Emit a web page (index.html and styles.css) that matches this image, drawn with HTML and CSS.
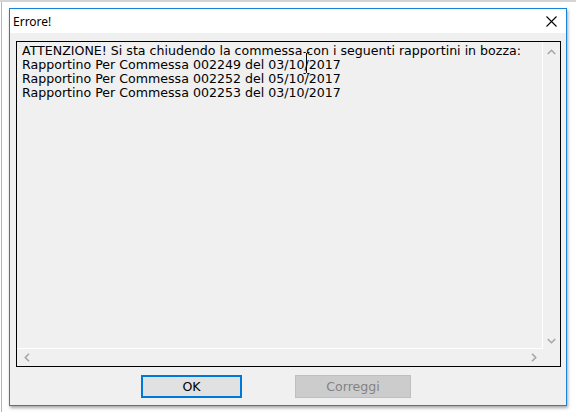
FILE: index.html
```html
<!DOCTYPE html>
<html lang="it">
<head>
  <meta charset="UTF-8" />
  <title>Errore!</title>
  <link rel="stylesheet" href="styles.css">
</head>
<body>
  <div class="desktop">
    <div class="dialog">
      <div class="titlebar">
        <span class="title">Errore!</span>
        <span class="close">
          <svg width="11" height="11" viewBox="0 0 11 11"><path d="M0.5 0.5 L10.5 10.5 M10.5 0.5 L0.5 10.5" stroke="#000" stroke-width="1.1"/></svg>
        </span>
      </div>
      <div class="content">
        <div class="textbox">
          <div class="text-area">
            <div class="lines">
              <p>ATTENZIONE! Si sta chiudendo la commessa con i seguenti rapportini in bozza:</p>
              <p>Rapportino Per Commessa 002249 del 03/10/2017</p>
              <p>Rapportino Per Commessa 002252 del 05/10/2017</p>
              <p>Rapportino Per Commessa 002253 del 03/10/2017</p>
            </div>
            <div class="vscroll">
              <svg width="9" height="6" viewBox="0 0 9 6"><polyline points="0.8,5 4.5,1.3 8.2,5" fill="none" stroke="#a6a6a6" stroke-width="1.6"/></svg>
              <svg width="9" height="6" viewBox="0 0 9 6"><polyline points="0.8,1 4.5,4.7 8.2,1" fill="none" stroke="#a6a6a6" stroke-width="1.6"/></svg>
            </div>
          </div>
          <div class="hscroll-row">
            <div class="hscroll">
              <svg width="6" height="9" viewBox="0 0 6 9"><polyline points="5,0.8 1.3,4.5 5,8.2" fill="none" stroke="#a6a6a6" stroke-width="1.6"/></svg>
              <svg width="6" height="9" viewBox="0 0 6 9"><polyline points="1,0.8 4.7,4.5 1,8.2" fill="none" stroke="#a6a6a6" stroke-width="1.6"/></svg>
            </div>
            <div class="corner"></div>
          </div>
        </div>
        <div class="buttons">
          <button class="btn btn-ok">OK</button>
          <button class="btn btn-disabled" disabled>Correggi</button>
        </div>
      </div>
    </div>
    <!-- cursore a I sopra al testo -->
    <svg class="ibeam" width="7" height="22" viewBox="0 0 7 22">
      <path d="M0.5 0.5 H2.5 L3.5 1.5 L4.5 0.5 H6.5 M3.5 1.5 V20.5 M0.5 21.5 H2.5 L3.5 20.5 L4.5 21.5 H6.5" fill="none" stroke="#000" stroke-width="1"/>
    </svg>
  </div>
</body>
</html>
```

FILE: styles.css
```css
html, body {
  margin: 0;
  padding: 0;
}

body {
  width: 576px;
  height: 416px;
  overflow: hidden;
  background: #ffffff;
}

/* finestra dietro al dialogo */
.desktop {
  position: relative;
  width: 576px;
  height: 416px;
  box-sizing: border-box;
  border-top: 2px solid #d4d4d4;
  padding-top: 6px;
  padding-left: 9px;
}

.desktop::before {
  content: "";
  position: absolute;
  left: 1px;
  top: 0;
  width: 1px;
  height: 410px;
  background: #b5b5b5;
}

.dialog {
  width: 558px;
  height: 398px;
  box-sizing: border-box;
  border: 1px solid #1883d7;
  background: #f0f0f0;
  display: flex;
  flex-direction: column;
  box-shadow: 1px 2px 3px rgba(0, 0, 0, 0.35);
}

.titlebar {
  height: 24px;
  background: #ffffff;
  display: flex;
  align-items: center;
  justify-content: space-between;
  padding: 0 9px 0 3px;
}

.title {
  font-family: "Noto Sans", "Open Sans", sans-serif;
  font-size: 12px;
  color: #000;
  padding-top: 1px;
}

.close {
  display: flex;
  padding-top: 1px;
}

.content {
  flex: 1;
  padding: 8px 5px 0 6px;
  display: flex;
  flex-direction: column;
}

.textbox {
  height: 326px;
  box-sizing: border-box;
  border: 1px solid #000;
  display: flex;
  flex-direction: column;
}

.text-area {
  flex: 1;
  display: flex;
  min-height: 0;
}

.lines {
  flex: 1;
  border-right: 1px solid #ffffff;
  border-bottom: 1px solid #ffffff;
  padding: 2px 0 0 5px;
  font-family: "DejaVu Sans", sans-serif;
  font-size: 12.6px;
  line-height: 14px;
  color: #000;
}

.lines p {
  margin: 0;
  white-space: nowrap;
}

.vscroll {
  width: 17px;
  display: flex;
  flex-direction: column;
  justify-content: space-between;
  align-items: center;
  padding: 7px 0 5px;
}

.hscroll-row {
  height: 17px;
  display: flex;
}

.hscroll {
  flex: 1;
  display: flex;
  justify-content: space-between;
  align-items: center;
  padding: 0 6px 0 7px;
}

.corner {
  width: 17px;
}

.buttons {
  display: flex;
  gap: 53px;
  padding: 8px 0 0 125px;
}

.btn {
  height: 23px;
  box-sizing: border-box;
  font-family: "DejaVu Sans", sans-serif;
  font-size: 12.6px;
  padding: 0;
}

.btn-ok {
  width: 101px;
  background: #e1e1e1;
  border: 2px solid #0078d7;
  color: #000;
}

.btn-disabled {
  width: 116px;
  background: #cccccc;
  border: 1px solid #bfbfbf;
  color: #838383;
}

.ibeam {
  position: absolute;
  left: 303px;
  top: 50px;
}
```
